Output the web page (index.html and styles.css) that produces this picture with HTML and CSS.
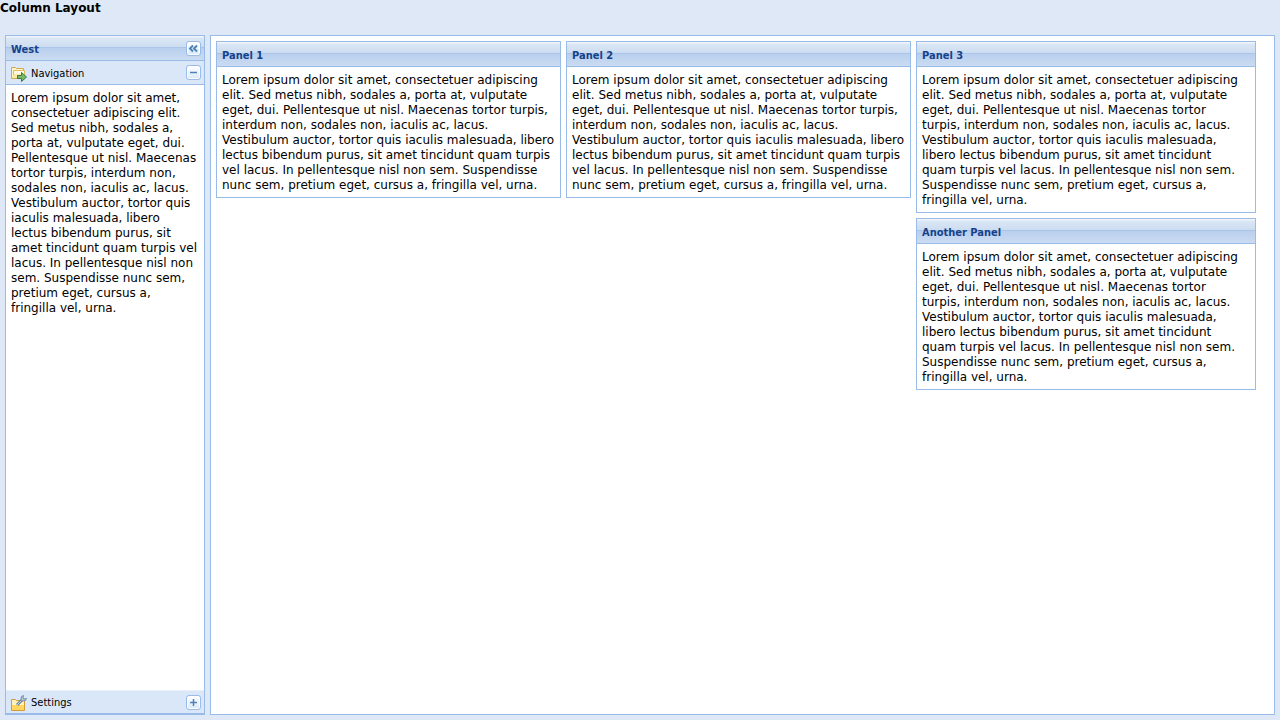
FILE: index.html
```html
<!DOCTYPE html>
<html lang="en">
<head>
<meta charset="utf-8">
<title>Column Layout</title>
<link rel="stylesheet" href="styles.css">
</head>
<body>
<h1 class="page-title">Column Layout</h1>
<div class="viewport">
  <aside class="west">
    <header class="panel-header">
      <h2 class="panel-title">West</h2>
      <button class="tool tool-collapse" type="button" aria-label="Collapse West">
        <svg viewBox="0 0 13 13"><path d="M6 3.500 3 6.500 6 9.500M10 3.500 7 6.500 10 9.500"/></svg>
      </button>
    </header>
    <div class="accordion-header">
      <svg class="icon" viewBox="0 0 16 16"><path fill="#fff4c5" stroke="#d3a74d" d="M.5 12.500v-11h4l1 1h7v2h1v8z"/><path fill="#fffbe8" stroke="#e0bd64" d="M2.500 11.500v-7h11v7z"/><path fill="#ffe8a0" d="M3 8h9v4H1z"/><path fill="#79b967" stroke="#39793f" d="M6.500 9.500h4v-3l5 4.500-5 4.500v-3h-4z"/></svg>
      <span class="accordion-title">Navigation</span>
      <button class="tool" type="button" aria-label="Collapse Navigation">
        <svg viewBox="0 0 13 13"><path d="M3 6.500h7"/></svg>
      </button>
    </div>
    <p class="copy west-copy">Lorem ipsum dolor sit amet, consectetuer adipiscing elit. Sed metus nibh, sodales a, porta at, vulputate eget, dui. Pellentesque ut nisl. Maecenas tortor turpis, interdum non, sodales non, iaculis ac, lacus. Vestibulum auctor, tortor quis iaculis malesuada, libero lectus bibendum purus, sit amet tincidunt quam turpis vel lacus. In pellentesque nisl non sem. Suspendisse nunc sem, pretium eget, cursus a, fringilla vel, urna.</p>
    <div class="accordion-header settings">
      <svg class="icon" viewBox="0 0 16 16"><path fill="#fff2bd" stroke="#d79a35" d="M.5 15.500v-11h4l1 1h8v10z"/><path fill="#ffd75e" d="M1 10h12v5H1z"/><path fill="none" stroke="#6e87a0" stroke-width="3" d="m6 10 5-5"/><path fill="none" stroke="#c5d4e1" d="m6 10 5-5"/><path fill="#b8c9d8" stroke="#7890a7" d="m10 5 .5-3.500 2-1-.5 2.500 1 1 2.500-.5-1 2-3 .5z"/></svg>
      <span class="accordion-title">Settings</span>
      <button class="tool" type="button" aria-label="Expand Settings">
        <svg viewBox="0 0 13 13"><path d="M3 6.500h7M6.500 3v7"/></svg>
      </button>
    </div>
  </aside>
  <main class="center">
    <div class="column">
      <section class="panel">
        <header class="panel-header"><h2 class="panel-title">Panel 1</h2></header>
        <p class="copy">Lorem ipsum dolor sit amet, consectetuer adipiscing elit. Sed metus nibh, sodales a, porta at, vulputate eget, dui. Pellentesque ut nisl. Maecenas tortor turpis, interdum non, sodales non, iaculis ac, lacus. Vestibulum auctor, tortor quis iaculis malesuada, libero lectus bibendum purus, sit amet tincidunt quam turpis vel lacus. In pellentesque nisl non sem. Suspendisse nunc sem, pretium eget, cursus a, fringilla vel, urna.</p>
      </section>
    </div>
    <div class="column">
      <section class="panel">
        <header class="panel-header"><h2 class="panel-title">Panel 2</h2></header>
        <p class="copy">Lorem ipsum dolor sit amet, consectetuer adipiscing elit. Sed metus nibh, sodales a, porta at, vulputate eget, dui. Pellentesque ut nisl. Maecenas tortor turpis, interdum non, sodales non, iaculis ac, lacus. Vestibulum auctor, tortor quis iaculis malesuada, libero lectus bibendum purus, sit amet tincidunt quam turpis vel lacus. In pellentesque nisl non sem. Suspendisse nunc sem, pretium eget, cursus a, fringilla vel, urna.</p>
      </section>
    </div>
    <div class="column column-last">
      <section class="panel">
        <header class="panel-header"><h2 class="panel-title">Panel 3</h2></header>
        <p class="copy">Lorem ipsum dolor sit amet, consectetuer adipiscing elit. Sed metus nibh, sodales a, porta at, vulputate eget, dui. Pellentesque ut nisl. Maecenas tortor turpis, interdum non, sodales non, iaculis ac, lacus. Vestibulum auctor, tortor quis iaculis malesuada, libero lectus bibendum purus, sit amet tincidunt quam turpis vel lacus. In pellentesque nisl non sem. Suspendisse nunc sem, pretium eget, cursus a, fringilla vel, urna.</p>
      </section>
      <section class="panel">
        <header class="panel-header"><h2 class="panel-title">Another Panel</h2></header>
        <p class="copy">Lorem ipsum dolor sit amet, consectetuer adipiscing elit. Sed metus nibh, sodales a, porta at, vulputate eget, dui. Pellentesque ut nisl. Maecenas tortor turpis, interdum non, sodales non, iaculis ac, lacus. Vestibulum auctor, tortor quis iaculis malesuada, libero lectus bibendum purus, sit amet tincidunt quam turpis vel lacus. In pellentesque nisl non sem. Suspendisse nunc sem, pretium eget, cursus a, fringilla vel, urna.</p>
      </section>
    </div>
  </main>
</div>
</body>
</html>
```
FILE: styles.css
```css
* { box-sizing: border-box; }
body {
  margin: 0;
  height: 100vh;
  display: flex;
  flex-direction: column;
  background: #dfe8f6;
  color: #000;
  font: 12px/15px "DejaVu Sans", sans-serif;
}
h1, h2, p { margin: 0; }
.page-title {
  padding: 1px 0 14px;
  font-size: 12px;
  line-height: 15px;
}
.viewport {
  flex: 1;
  min-height: 0;
  display: flex;
  gap: 5px;
  padding: 5px;
}
.west {
  flex: 0 0 200px;
  display: flex;
  flex-direction: column;
  background: #fff;
  border: 1px solid #99bbe8;
}
.panel-header {
  display: flex;
  align-items: center;
  height: 25px;
  padding: 1px 3px 0 5px;
  border-bottom: 1px solid #99bbe8;
  background: linear-gradient(#f0f5fb 0 1px, #dbe7f5 2px, #ccdcf0 11px, #aac5e7 11px 12px, #b9cfee 12px, #cbdcf2 100%);
}
.panel-title {
  flex: 1;
  padding-top: 2px;
  color: #15428b;
  font: bold 11px/15px "DejaVu Sans Condensed", "DejaVu Sans", sans-serif;
}
.accordion-header {
  display: flex;
  align-items: center;
  height: 24px;
  padding: 0 3px 0 5px;
  border-bottom: 1px solid #99bbe8;
  background: #d9e7f8;
}
.accordion-title {
  flex: 1;
  padding: 2px 0 0 4px;
  font: 11px/15px "DejaVu Sans Condensed", "DejaVu Sans", sans-serif;
}
.icon {
  width: 16px;
  height: 16px;
  margin-top: 2px;
}
.settings { border-top: 1px solid #e8f1fb; }
.settings .accordion-title { padding-top: 0; }
.tool {
  width: 15px;
  height: 15px;
  padding: 0;
  display: flex;
  border: 1px solid #99bbe8;
  border-radius: 3px;
  background: linear-gradient(#fff, #d9e9f9);
  box-shadow: inset 0 0 0 1px #fff;
}
.tool svg {
  width: 13px;
  height: 13px;
  fill: none;
  stroke: #4f83b8;
  stroke-width: 1.5;
}
.tool-collapse svg { stroke-width: 2; }
.copy { padding: 6px 5px 4px; }
.west-copy { flex: 1; overflow: auto; }
.center {
  flex: 1;
  min-width: 0;
  display: grid;
  grid-template-columns: 345fr 345fr 340fr;
  gap: 5px;
  padding: 5px 18px 5px 5px;
  background: #fff;
  border: 1px solid #99bbe8;
  overflow: auto;
}
.column {
  display: flex;
  flex-direction: column;
  gap: 5px;
}
.column-last .copy { padding-right: 12px; }
.panel { border: 1px solid #99bbe8; }
```
